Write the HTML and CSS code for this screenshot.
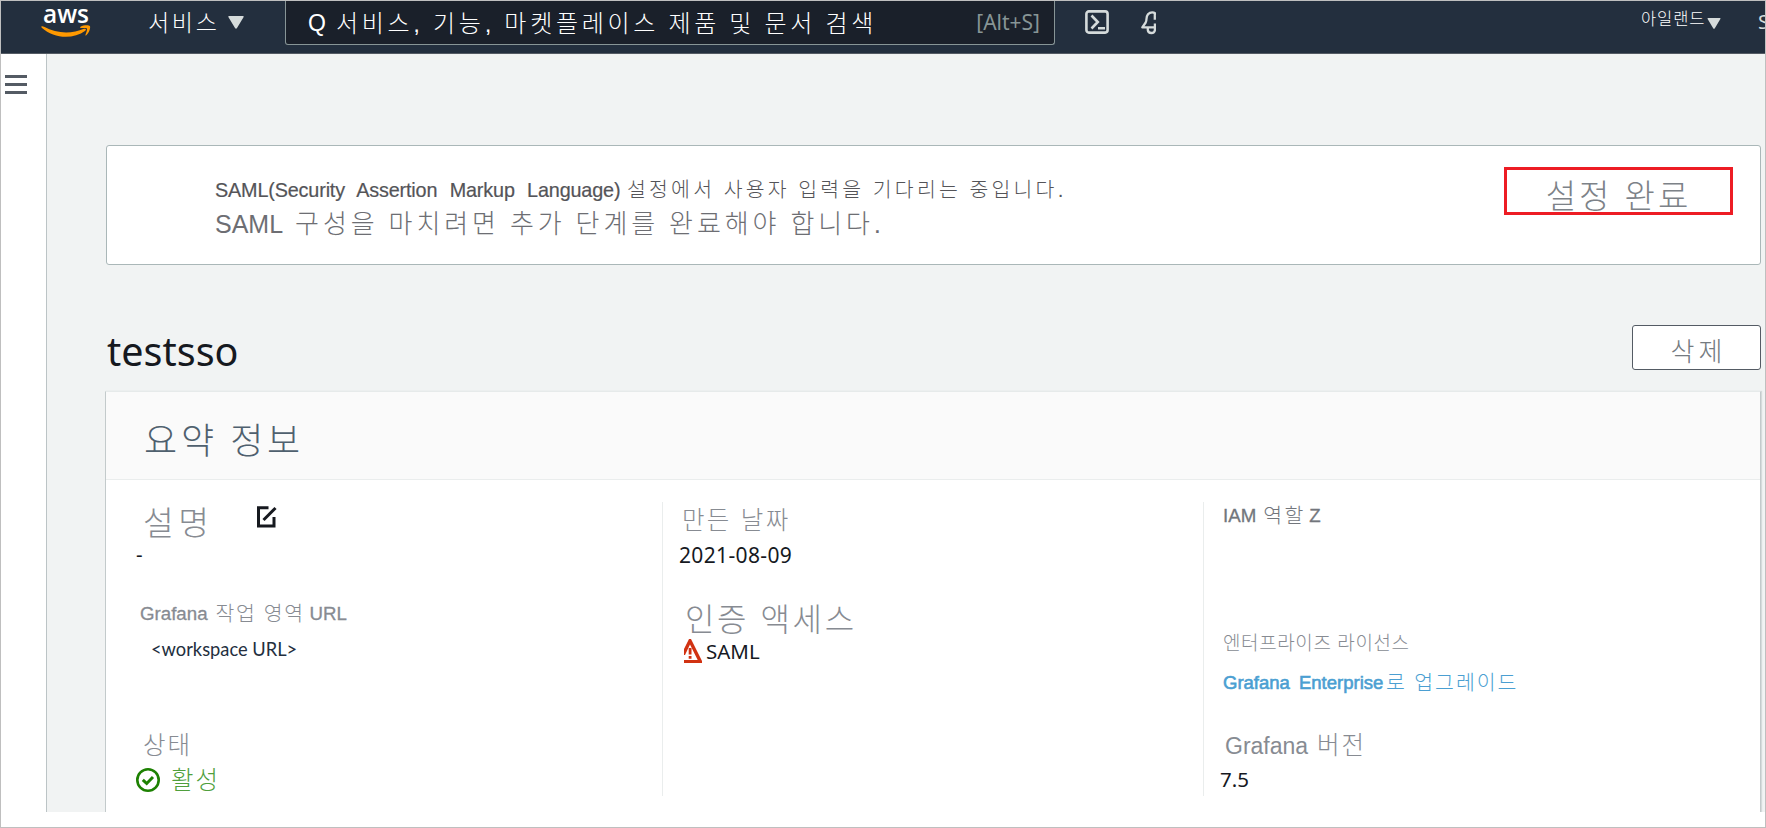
FILE: index.html
```html
<!DOCTYPE html>
<html lang="ko">
<head>
<meta charset="utf-8">
<title>testsso</title>
<link rel="stylesheet" href="styles.css">
</head>
<body>
<div class="shell">
  <header class="topbar">
    <svg class="logo" width="50" height="34" viewBox="0 0 50 34">
      <text class="logo-text" x="2" y="17.5" textLength="46" lengthAdjust="spacingAndGlyphs">aws</text>
      <path d="M0.3 21.6C1 20.8 2 21.2 3 21.8C16 29 31 29 43 23.8C44.600 23.200 45.700 24.600 44.300 25.700C32 34.800 13 33.800 0.700 22.800Z" fill="#f90"/>
      <path d="M39.500 21.800C43 19.600 48 20 48.900 21C49.700 22.300 48.500 27.400 45.300 30.300C44.700 30.800 44.200 30.500 44.400 29.900C45.300 27.800 46.500 24.600 46 23.600C45.300 22.700 42 22.900 40 23.100C39.200 23.200 38.900 22.300 39.500 21.800Z" fill="#f90"/>
    </svg>
    <div class="services"><span>서비스</span>
      <svg width="16" height="13" viewBox="0 0 16 13"><path d="M1 0H15Q16.300 0 15.500 1.300L9 12Q8 13.400 7 12L.5 1.300Q-.3 0 1 0Z" fill="#d5dbdb"/></svg>
    </div>
    <div class="search">
      <span class="search-q">Q</span><span class="search-hint">서비스, 기능, 마켓플레이스 제품 및 문서 검색</span><span class="search-key">[Alt+S]</span>
    </div>
    <svg class="shell-icon" width="24" height="24" viewBox="0 0 24 24" fill="none" stroke="#d5dbdb">
      <rect x="1.400" y="1.400" width="21.200" height="21.200" rx="2.500" stroke-width="2.600"/>
      <path d="M6.500 5.500L12.800 12L6.500 18.500M13 18.300H20" stroke-width="2.600"/>
    </svg>
    <svg class="bell-icon" width="15" height="24" viewBox="0 0 15 24" fill="none" stroke="#d5dbdb" stroke-width="2.300" stroke-linejoin="round">
      <path d="M15.500 3.500C13 .5 9.300 .7 7 3.300C4.500 6.500 6.200 9 4.700 11.500L1.300 16.300H15M13.800 3V8.800M13.900 12.500V16"/>
      <path d="M6.800 16.800V19C7.300 23 13.500 23 13.900 19V16.800"/>
    </svg>
    <div class="account"><span>아일랜드</span>
      <svg width="14" height="11" viewBox="0 0 16 13"><path d="M1 0H15Q16.300 0 15.500 1.300L9 12Q8 13.400 7 12L.5 1.300Q-.3 0 1 0Z" fill="#d5dbdb"/></svg>
    </div>
    <span class="support">S</span>
  </header>
  <div class="workspace">
    <nav class="rail"><span class="bar"></span><span class="bar"></span><span class="bar"></span></nav>
    <main class="content">
      <section class="alert">
        <div class="alert-body">
          <p class="alert-title"><span class="alert-latin">SAML(Security Assertion Markup Language)</span><span class="alert-ko">설정에서 사용자 입력을 기다리는 중입니다.</span></p>
          <p class="alert-text"><span>SAML</span><span class="alert-text-ko">구성을 마치려면 추가 단계를 완료해야 합니다.</span></p>
        </div>
        <button class="setup">설정 완료</button>
      </section>
      <div class="title-row">
        <h1>testsso</h1>
        <button class="delete">삭제</button>
      </div>
      <section class="panel">
        <h2>요약 정보</h2>
        <div class="columns">
          <div class="col col-a">
            <div class="desc"><span>설명</span>
              <svg width="20" height="22" viewBox="0 0 20 22" fill="none" stroke="#16191f" stroke-width="3"><path d="M11.500 1.700H1.500V20H17V11"/><path d="M6.500 14L18.500 2"/></svg>
            </div>
            <div class="value dash">-</div>
            <div class="label url-label"><span class="latin">Grafana</span><span class="url-ko">작업 영역</span><span class="latin">URL</span></div>
            <div class="url">&lt;workspace URL&gt;</div>
            <div class="label mid status-label">상태</div>
            <div class="status">
              <svg width="24" height="24" viewBox="0 0 24 24" fill="none" stroke="#1d8102"><circle cx="12" cy="12" r="10.700" stroke-width="2.600"/><path d="M6.800 11.800L10.700 15.500L17 9" stroke-width="3"/></svg>
              <span>활성</span>
            </div>
          </div>
          <div class="col col-b">
            <div class="label mid created">만든 날짜</div>
            <div class="value date">2021-08-09</div>
            <div class="label auth">인증 액세스</div>
            <div class="value saml">
              <svg width="18" height="24" viewBox="0 0 18 24"><path d="M5 0H7L18 22V24H0V21H13.700L6 5.500L1 16H0V10Z" fill="#d13212"/><path d="M4.700 9H7.500V15.500H4.700ZM4.700 17H7.500V19.700H4.700Z" fill="#d13212"/></svg>
              <span>SAML</span>
            </div>
          </div>
          <div class="col col-c">
            <div class="label iam"><span class="latin">IAM</span><span class="iam-ko">역할</span><span class="latin">Z</span></div>
            <div class="label license">엔터프라이즈 라이선스</div>
            <a class="link"><span class="link-latin">Grafana Enterprise</span><span class="link-ko">로 업그레이드</span></a>
            <div class="label mid version"><span class="version-latin">Grafana</span><span>버전</span></div>
            <div class="value number">7.5</div>
          </div>
        </div>
      </section>
    </main>
  </div>
</div>
</body>
</html>
```
FILE: styles.css
```css
* { box-sizing: border-box; }
body {
  margin: 0;
  width: 1766px;
  height: 828px;
  border: 1px solid #bfbfbf;
  background: #fff;
  overflow: hidden;
  font-family: "Liberation Sans", "Noto Sans CJK KR", sans-serif;
  font-weight: 300;
}
p, h1, h2 { margin: 0; font-weight: 300; }
svg { display: block; flex: none; }
span, div, button, h1, h2 { white-space: nowrap; }
button { font-family: inherit; font-weight: 300; padding: 0; background: #fff; }

.shell { height: 811px; display: flex; flex-direction: column; overflow: hidden; }

.topbar {
  height: 53px;
  flex: none;
  display: flex;
  align-items: flex-start;
  background: #232f3e;
  border-bottom: 1px solid #545b64;
  color: #fff;
  overflow: hidden;
}
.logo { margin: 4px 0 0 40px; }
.logo-text { font-family: "Open Sans", sans-serif; font-weight: 600; font-size: 26px; fill: #fff; }
.services { display: flex; width: 194px; flex: none; padding: 7px 0 0 57px; font-size: 23px; line-height: 30px; letter-spacing: 2.700px; }
.services span { width: 80px; }
.services svg { margin-top: 8px; }
.search {
  width: 770px;
  height: 44px;
  flex: none;
  display: flex;
  padding: 6px 14px 0 22px;
  border: 1px solid #879596;
  border-top: 0;
  border-radius: 0 0 3px 3px;
  background: #1a202a;
  line-height: 33px;
}
.search-q { width: 28px; font-size: 23px; font-weight: 400; }
.search-hint { font-size: 24px; letter-spacing: 3.700px; word-spacing: -1px; }
.search-key { margin-left: auto; font-family: "Noto Sans", sans-serif; font-weight: 400; font-size: 21px; color: #879596; line-height: 30px; }
.shell-icon { margin: 9px 0 0 30px; }
.bell-icon { margin: 10px 0 0 32px; }
.account { display: flex; margin: 7px 0 0 485px; font-size: 16.500px; line-height: 23px; letter-spacing: .9px; }
.account span { width: 66px; }
.account svg { margin-top: 10px; }
.support { margin: 9px 0 0 37px; font-family: "Noto Sans", sans-serif; font-weight: 400; font-size: 20px; line-height: 24px; color: #d5dbdb; }

.workspace { flex: 1; display: flex; min-height: 0; }
.rail {
  width: 46px;
  flex: none;
  display: flex;
  flex-direction: column;
  gap: 5px;
  padding: 21px 0 0 4px;
  background: #fff;
  border-right: 1px solid #bcc4c6;
}
.bar { width: 22px; height: 3px; background: #545b64; }
.content { flex: 1; background: #f1f3f3; padding: 91px 3px 0 59px; display: flex; flex-direction: column; }

.alert {
  height: 120px;
  width: 1655px;
  flex: none;
  display: flex;
  justify-content: space-between;
  border: 1px solid #aab7b8;
  border-radius: 3px;
  background: #fff;
  padding: 21px 27px 0 108px;
}
.alert-body { padding-top: 11px; }
.alert-title { display: flex; gap: 8px; font-size: 20.500px; line-height: 24px; color: #545458; }
.alert-latin { width: 404px; font-size: 19.800px; word-spacing: 7px; letter-spacing: -.15px; -webkit-text-stroke: .2px #545458; }
.alert-ko { letter-spacing: 3.200px; word-spacing: -.5px; }
.alert-text { display: flex; gap: 12px; margin-top: 8px; font-size: 26px; line-height: 28px; color: #6d6e73; }
.alert-text span:first-child { font-size: 25px; }
.alert-text-ko { letter-spacing: 3.880px; word-spacing: -1px; }
.setup { width: 229px; height: 48px; border: 3px solid #ed1c24; font-size: 33px; line-height: 42px; letter-spacing: 3px; padding: 6px 0 0 0; color: #7d8288; }

.title-row { display: flex; justify-content: space-between; width: 1655px; margin-top: 60px; height: 66px; flex: none; }
h1 { padding: 3px 0 0 1px; font-family: "Noto Sans", sans-serif; font-weight: 400; font-size: 39.500px; line-height: 46px; color: #16191f; }
.delete { width: 129px; height: 45px; border: 1px solid #545b64; border-radius: 3px; font-size: 26px; line-height: 38px; letter-spacing: 4px; padding: 7px 0 0 4px; color: #747a80; }

.panel { flex: 1; width: 1656px; margin-left: -1px; background: #fff; border: 1px solid #c3cacb; border-top-color: #e6eaea; border-bottom: 0; box-shadow: 1px 0 1px #d5dbdb; }
h2 { height: 88px; padding: 25px 0 0 38px; background: #fafafa; border-bottom: 1px solid #eaeded; font-size: 36px; line-height: 50px; letter-spacing: 3.800px; word-spacing: -1.500px; color: #4f606e; }
.columns { display: grid; grid-template-columns: 556px 541px 1fr; height: 294px; margin-top: 22px; }
.col { display: flex; flex-direction: column; align-items: flex-start; }
.col-b, .col-c { border-left: 1px solid #eaeded; }
.label { color: #878b92; font-size: 19px; line-height: 24px; }
.mid { font-size: 24.500px; line-height: 28px; }
.value { font-family: "Noto Sans", sans-serif; font-weight: 400; font-size: 20.500px; line-height: 24px; color: #16191f; }
.latin { font-size: 18.700px; -webkit-text-stroke: .3px currentColor; }

.col-a { padding-top: 4px; }
.desc { display: flex; margin-left: 37px; font-size: 33.500px; line-height: 36px; letter-spacing: 4.500px; color: #878b92; }
.desc span { width: 114px; }
.dash { margin: 0 0 0 30px; }
.url-label { display: flex; gap: 8px; margin: 36px 0 0 34px; font-size: 20.500px; }
.url-ko { letter-spacing: 1.600px; width: 86px; }
.url { margin: 11px 0 0 45px; font-family: Lato, sans-serif; font-weight: 400; font-size: 18.300px; line-height: 24px; color: #232f3e; }
.status-label { margin: 71px 0 0 37px; letter-spacing: 2px; }
.status { display: flex; align-items: center; gap: 11px; margin: 7px 0 0 30px; font-size: 24.500px; line-height: 28px; letter-spacing: 2px; color: #4f9f3c; }
.status svg { margin-top: -2px; }

.col-b { padding-top: 5px; }
.created { margin-left: 19px; letter-spacing: 2.300px; }
.date { margin: 8px 0 0 16px; font-size: 21px; letter-spacing: .35px; }
.auth { margin: 36px 0 0 22px; font-size: 32px; line-height: 34px; letter-spacing: 2.600px; }
.saml { display: flex; gap: 4px; margin: 2px 0 0 21px; }

.col-c { padding-top: 2px; }
.iam { display: flex; gap: 7px; margin-left: 19px; font-size: 20.500px; color: #72767c; }
.iam-ko { letter-spacing: 2.500px; width: 39px; }
.license { margin: 104px 0 0 19px; font-size: 19px; letter-spacing: .6px; }
.link { display: flex; gap: 2px; margin: 15px 0 0 19px; font-size: 20.500px; line-height: 24px; color: #4b9fd2; }
.link-latin { width: 161px; font-size: 18.500px; word-spacing: 4px; -webkit-text-stroke: .6px currentColor; }
.link-ko { letter-spacing: 1.900px; }
.version { display: flex; margin: 37px 0 0 21px; letter-spacing: 2px; }
.version-latin { width: 92px; font-size: 23px; letter-spacing: 0; }
.number { margin: 7px 0 0 16px; }
```
